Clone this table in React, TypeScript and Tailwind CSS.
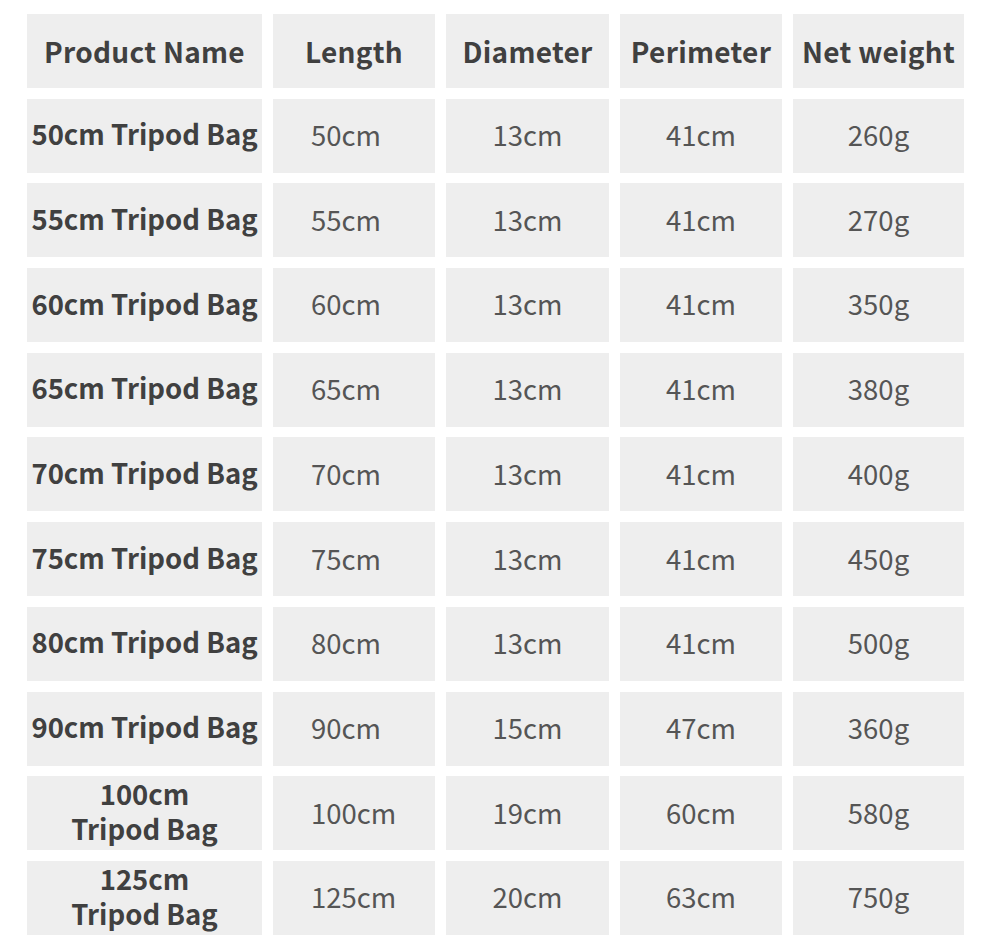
import React from 'react';

const headers = ['Product Name', 'Length', 'Diameter', 'Perimeter', 'Net weight'];

const rows: [string, string, string, string, string][] = [
  ['50cm Tripod Bag', '50cm', '13cm', '41cm', '260g'],
  ['55cm Tripod Bag', '55cm', '13cm', '41cm', '270g'],
  ['60cm Tripod Bag', '60cm', '13cm', '41cm', '350g'],
  ['65cm Tripod Bag', '65cm', '13cm', '41cm', '380g'],
  ['70cm Tripod Bag', '70cm', '13cm', '41cm', '400g'],
  ['75cm Tripod Bag', '75cm', '13cm', '41cm', '450g'],
  ['80cm Tripod Bag', '80cm', '13cm', '41cm', '500g'],
  ['90cm Tripod Bag', '90cm', '15cm', '47cm', '360g'],
  ['100cm\nTripod Bag', '100cm', '19cm', '60cm', '580g'],
  ['125cm\nTripod Bag', '125cm', '20cm', '63cm', '750g'],
];

const font = { fontFamily: '"Noto Sans CJK SC", "Noto Sans", sans-serif' };

export default function App() {
  return (
    <div className="w-[990px] h-[951px] bg-white pl-[27px] pt-[14px]" style={font}>
      <div className="grid grid-cols-[235px_162px_163px_162px_171px] gap-x-[11px] gap-y-[10.7px] auto-rows-[74px]">
        {headers.map((h) => (
          <div key={h} className="bg-[#eeeeee] flex items-center justify-center text-[28px] font-bold text-[#404040] whitespace-nowrap tracking-[0.3px]">
            {h}
          </div>
        ))}
        {rows.map((r) => (
          <React.Fragment key={r[0]}>
            <div className="bg-[#eeeeee] flex items-center justify-center text-center text-[27.5px] font-bold leading-[35px] pb-[4px] text-[#404040] whitespace-pre-line">
              {r[0]}
            </div>
            <div className="bg-[#eeeeee] flex items-center pl-[38px] text-[27.5px] text-[#555555] pb-[2px]">
              {r[1]}
            </div>
            {r.slice(2).map((v, i) => (
              <div key={i} className="bg-[#eeeeee] flex items-center justify-center text-[27.5px] text-[#555555] pb-[2px]">
                {v}
              </div>
            ))}
          </React.Fragment>
        ))}
      </div>
    </div>
  );
}
